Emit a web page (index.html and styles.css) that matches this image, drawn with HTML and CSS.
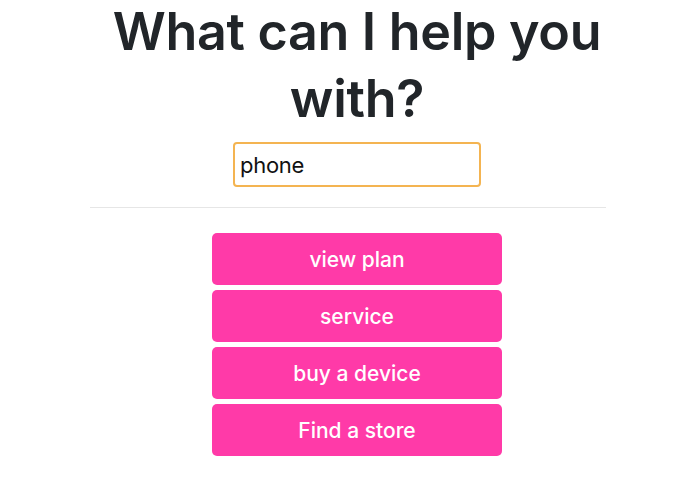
FILE: index.html
```html
<!DOCTYPE html>
<html lang="en">
  <head>
    <meta charset="UTF-8" />
    <meta name="viewport" content="width=device-width, initial-scale=1.0" />
    <title>Help</title>
    <link rel="stylesheet" href="styles.css">
  </head>
  <body>
    <main class="help">
      <h1>What can I help you with?</h1>

      <form class="search">
        <input type="text" value="phone" />
      </form>

      <hr />

      <ul class="actions">
        <li><button>view plan</button></li>
        <li><button>service</button></li>
        <li><button>buy a device</button></li>
        <li><button>Find a store</button></li>
      </ul>
    </main>
  </body>
</html>
```

FILE: styles.css
```css
body {
  margin: 0;
  font-family: Inter, "Liberation Sans", Arial, sans-serif;
  color: #212529;
  background: #fff;
}

.help {
  width: 516px;
  margin: 0 auto;
  text-align: center;
}

/* the content column sits a little right of the rule */
h1,
.search,
.actions {
  padding-left: 19px;
}

h1 {
  margin: -2px 0 10px;
  font-size: 52px;
  font-weight: 600;
  line-height: 67px;
  letter-spacing: -0.3px;
}

.search {
  display: flex;
  justify-content: center;

  input {
    width: 248px;
    height: 45px;
    box-sizing: border-box;
    padding: 0 5px;
    border: 2px solid #f4b451;
    border-radius: 4px;
    font-family: Inter, "Liberation Sans", Arial, sans-serif;
    font-size: 22px;
    letter-spacing: -0.3px;
    color: #111;
    outline: none;
  }
}

hr {
  margin: 20px 0 25px;
  border: 0;
  border-top: 1px solid #e6e6e6;
}

.actions {
  list-style: none;
  margin: 0;
  display: flex;
  flex-direction: column;
  align-items: center;
  gap: 5px;

  button {
    width: 290px;
    height: 52px;
    border: 0;
    border-radius: 5px;
    background: #ff3aa8;
    color: #fff;
    font-family: Inter, "Liberation Sans", Arial, sans-serif;
    font-size: 21px;
    font-weight: 500;
    cursor: pointer;
  }
}
```
